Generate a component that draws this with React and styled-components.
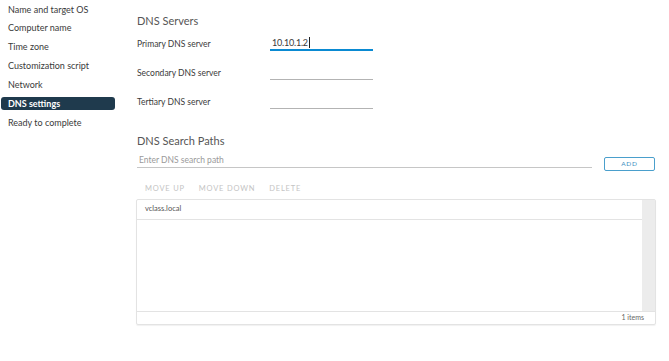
import React from 'react'
import styled, { createGlobalStyle } from 'styled-components'

const GlobalStyle = createGlobalStyle`
  html, body {
    margin: 0;
    padding: 0;
    background: #fff;
  }
  body {
    font-family: Lato, "Noto Sans", sans-serif;
    color: #333;
  }
`

const Page = styled.div`
  display: flex;
  width: 669px;
  height: 361px;
  overflow: hidden;
`

const Sidebar = styled.nav`
  width: 136px;
  flex-shrink: 0;
  padding: 2.5px 0 0 1px;
  box-sizing: border-box;
  display: flex;
  flex-direction: column;
  gap: 5.85px;
`

const NavItem = styled.div`
  width: 114px;
  height: 13px;
  padding-left: 7px;
  box-sizing: border-box;
  border-radius: 3px;
  font-size: 9px;
  line-height: 13px;
  white-space: nowrap;
  font-weight: ${p => (p.$active ? 700 : 400)};
  color: ${p => (p.$active ? '#fff' : '#3a3a3a')};
  background: ${p => (p.$active ? '#1f3a4d' : 'transparent')};
`

const Main = styled.main`
  width: 520px;
  padding-top: 14px;
  display: flex;
  flex-direction: column;
`

const SectionTitle = styled.h2`
  margin: ${p => p.$top || 0}px 0 0 1px;
  height: 14px;
  font-size: 11px;
  line-height: 14px;
  font-weight: 400;
  color: #565656;
`

const FormRow = styled.div`
  display: flex;
  align-items: center;
  height: 15px;
  margin-top: ${p => p.$top}px;
  padding-left: 1px;
`

const Label = styled.label`
  width: 133px;
  font-size: 8.5px;
  color: #3a3a3a;
`

const Field = styled.div`
  width: 103px;
  height: 15px;
  box-sizing: border-box;
  border-bottom: ${p => (p.$focused ? '2px solid #0a8ad2' : '1px solid #b3b3b3')};
  display: flex;
  align-items: center;
  padding-left: 2px;
  font-size: 9px;
  color: #3a3a3a;
  letter-spacing: -0.2px;
`

const Caret = styled.span`
  display: inline-block;
  width: 1px;
  height: 11px;
  background: #222;
  margin-left: 1px;
`

const SearchRow = styled.div`
  display: flex;
  align-items: flex-start;
  margin-top: 6px;
  padding-left: 1px;
`

const SearchField = styled.div`
  width: 455px;
  height: 14px;
  box-sizing: border-box;
  border-bottom: 1px solid #c6c6c6;
  font-size: 8.5px;
  color: #9a9a9a;
  padding-left: 2px;
  line-height: 12px;
`

const AddButton = styled.button`
  margin: 3px 0 0 12px;
  width: 51px;
  height: 14px;
  padding: 0;
  box-sizing: border-box;
  border: 1px solid #4a9fcc;
  border-radius: 2px;
  background: #fff;
  color: #3b8ec1;
  font-family: Lato, "Noto Sans", sans-serif;
  font-size: 6.5px;
  letter-spacing: 0.8px;
  line-height: 12px;
`

const Toolbar = styled.div`
  display: flex;
  gap: 14px;
  margin-top: 10px;
  height: 14px;
  padding-left: 9px;
  align-items: center;
`

const ToolButton = styled.span`
  font-size: 7.5px;
  letter-spacing: 0.8px;
  color: #c4c4c4;
`

const Grid = styled.div`
  margin-top: 4px;
  width: 520px;
  height: 126px;
  box-sizing: border-box;
  border: 1px solid #e3e3e3;
  border-radius: 2px;
  box-shadow: 0 1px 1px rgba(0, 0, 0, 0.06);
  display: flex;
  flex-direction: column;
`

const GridBody = styled.div`
  flex: 1;
  display: flex;
`

const Rows = styled.div`
  flex: 1;
`

const GridRow = styled.div`
  height: 20px;
  box-sizing: border-box;
  border-bottom: 1px solid #e3e3e3;
  padding-left: 8px;
  font-size: 7.5px;
  line-height: 17px;
  color: #555;
`

const Scrollbar = styled.div`
  width: 13px;
  background: #ececec;
`

const Footer = styled.div`
  height: 12px;
  border-top: 1px solid #e3e3e3;
  text-align: right;
  padding-right: 11px;
  font-size: 7px;
  line-height: 11px;
  color: #666;
`

const steps = [
  'Name and target OS',
  'Computer name',
  'Time zone',
  'Customization script',
  'Network',
  'DNS settings',
  'Ready to complete',
]

const servers = [
  { label: 'Primary DNS server', value: '10.10.1.2', focused: true, top: 8 },
  { label: 'Secondary DNS server', value: '', top: 14 },
  { label: 'Tertiary DNS server', value: '', top: 14 },
]

const App = () => {
  return (
    <>
      <GlobalStyle />
      <Page>
        <Sidebar>
          {steps.map(s => (
            <NavItem key={s} $active={s === 'DNS settings'}>{s}</NavItem>
          ))}
        </Sidebar>
        <Main>
          <SectionTitle>DNS Servers</SectionTitle>
          {servers.map(s => (
            <FormRow key={s.label} $top={s.top}>
              <Label>{s.label}</Label>
              <Field $focused={s.focused}>
                {s.value}
                {s.focused && <Caret />}
              </Field>
            </FormRow>
          ))}
          <SectionTitle $top={25}>DNS Search Paths</SectionTitle>
          <SearchRow>
            <SearchField>Enter DNS search path</SearchField>
            <AddButton>ADD</AddButton>
          </SearchRow>
          <Toolbar>
            <ToolButton>MOVE UP</ToolButton>
            <ToolButton>MOVE DOWN</ToolButton>
            <ToolButton>DELETE</ToolButton>
          </Toolbar>
          <Grid>
            <GridBody>
              <Rows>
                <GridRow>vclass.local</GridRow>
              </Rows>
              <Scrollbar />
            </GridBody>
            <Footer>1 items</Footer>
          </Grid>
        </Main>
      </Page>
    </>
  )
}

export default App
